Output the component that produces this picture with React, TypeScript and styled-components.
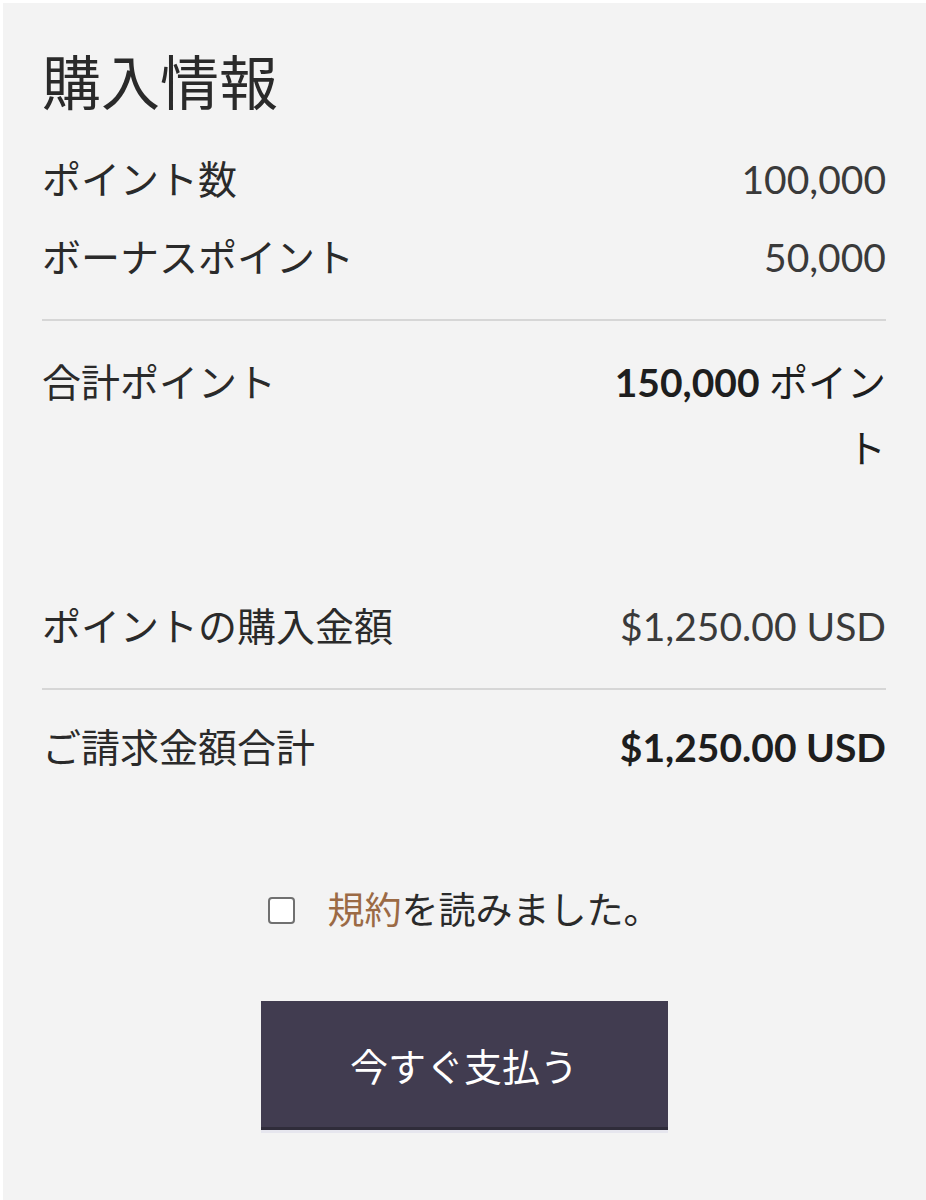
import styled, { createGlobalStyle } from 'styled-components';

const GlobalStyle = createGlobalStyle`
  html, body {
    margin: 0;
    padding: 0;
    background: #ffffff;
  }
  body {
    font-family: Lato, "Noto Sans CJK JP", sans-serif;
    color: #262626;
  }
`;

const Panel = styled.section`
  margin: 3px 0 0 3px;
  min-height: calc(100vh - 3px);
  box-sizing: border-box;
  background: #f3f3f3;
  padding: 50px 40px 0 39px;
`;

const Title = styled.h2`
  margin: 0 0 27px;
  font-size: 59px;
  font-weight: 400;
  line-height: 60px;
  color: #2a2a2a;
`;

const Row = styled.div<{ $gap?: number }>`
  display: flex;
  justify-content: space-between;
  align-items: flex-start;
  padding: 6px 0;
  margin-bottom: ${({ $gap }) => $gap ?? 0}px;
  font-size: 39px;
  line-height: 66px;
`;

const Label = styled.div`
  flex: 1;
  color: #2a2a2a;
`;

const Value = styled.div<{ $strong?: boolean }>`
  max-width: 290px;
  text-align: right;
  color: ${({ $strong }) => ($strong ? '#1e1e1e' : '#3a3a3a')};
  font-weight: ${({ $strong }) => ($strong ? 700 : 400)};
`;

const Unit = styled.span`
  font-weight: 400;
`;

const Divider = styled.hr<{ $top: number; $bottom: number }>`
  border: none;
  height: 2px;
  background: #d6d6d6;
  margin: ${({ $top, $bottom }) => `${$top}px 0 ${$bottom}px`};
`;

const Agree = styled.label`
  display: flex;
  align-items: center;
  justify-content: center;
  gap: 33px;
  margin-top: 91px;
  font-size: 37px;
  line-height: 66px;
  color: #2a2a2a;
`;

const Box = styled.span`
  width: 23px;
  height: 23px;
  border: 2px solid #707070;
  border-radius: 4px;
  background: #ffffff;
`;

const TermsLink = styled.span`
  color: #9b6a45;
`;

const PayButton = styled.button`
  display: block;
  width: 407px;
  height: 126px;
  margin: 58px auto 0;
  border: none;
  border-radius: 0;
  background: #413c50;
  color: #ffffff;
  font-family: Lato, "Noto Sans CJK JP", sans-serif;
  font-size: 38px;
  cursor: pointer;
  box-shadow: 0 3px 0 #2f2c3a, 0 6px 0 #e6e6ee;
`;

export default function App() {
  return (
    <>
      <GlobalStyle />
      <Panel>
        <Title>購入情報</Title>
        <Row>
          <Label>ポイント数</Label>
          <Value>100,000</Value>
        </Row>
        <Row>
          <Label>ボーナスポイント</Label>
          <Value>50,000</Value>
        </Row>
        <Divider $top={23} $bottom={22} />
        <Row $gap={100}>
          <Label>合計ポイント</Label>
          <Value $strong>
            150,000 <Unit>ポイント</Unit>
          </Value>
        </Row>
        <Row>
          <Label>ポイントの購入金額</Label>
          <Value>$1,250.00 USD</Value>
        </Row>
        <Divider $top={23} $bottom={18} />
        <Row>
          <Label>ご請求金額合計</Label>
          <Value $strong>$1,250.00 USD</Value>
        </Row>
        <Agree>
          <Box />
          <span>
            <TermsLink>規約</TermsLink>を読みました。
          </span>
        </Agree>
        <PayButton>今すぐ支払う</PayButton>
      </Panel>
    </>
  );
}
